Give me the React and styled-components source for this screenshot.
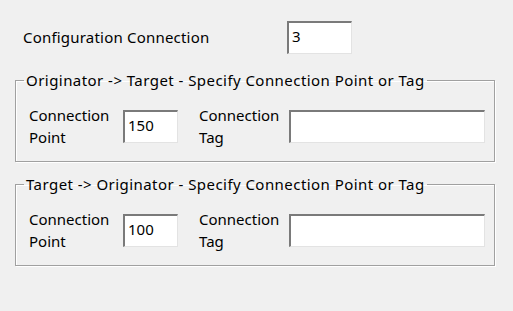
import React from "react";
import styled, { createGlobalStyle } from "styled-components";

const GlobalStyle = createGlobalStyle`
    html, body {
        margin: 0;
        padding: 0;
        background: #f0f0f0;
    }
    body {
        font-family: "Noto Sans", "Open Sans", sans-serif;
        font-size: 15px;
        color: #000;
    }
`;

const Dialog = styled.div`
    width: 513px;
    height: 311px;
    background: #f0f0f0;
    box-sizing: border-box;
    padding-top: 21px;
    overflow: hidden;
`;

const TopRow = styled.div`
    display: flex;
    align-items: flex-start;
    padding-left: 23px;
    height: 33px;
`;

const TopLabel = styled.div`
    width: 264px;
    line-height: 33px;
    letter-spacing: 0.2px;
`;

const TextBox = styled.div`
    box-sizing: border-box;
    width: ${(props) => props.width}px;
    height: 33px;
    background: #fff;
    border-top: 2px solid #7a7a7a;
    border-left: 2px solid #7a7a7a;
    border-right: 1px solid #e3e3e3;
    border-bottom: 1px solid #e3e3e3;
    padding: 3px 3px;
    line-height: 20px;
    flex-shrink: 0;
`;

const Group = styled.fieldset`
    box-sizing: border-box;
    margin: ${(props) => props.top}px 0 0 15px;
    width: 480px;
    height: 92px;
    padding: 20px 0 0 13px;
    border: 1px solid #a0a0a0;
    box-shadow: 1px 1px 0 #fff, inset 1px 1px 0 #fff;
    min-width: 0;
`;

const Legend = styled.legend`
    margin-left: -5px;
    padding: 0 2px;
    line-height: 20px;
    letter-spacing: 0.45px;
`;

const FieldRow = styled.div`
    display: flex;
    align-items: flex-start;
`;

const FieldLabel = styled.div`
    width: ${(props) => props.width}px;
    line-height: 22px;
    margin-top: -6px;
    flex-shrink: 0;
`;

const Field = styled.div`
    display: flex;
    align-items: flex-start;
    margin-right: ${(props) => props.gap || 0}px;
`;

const ConnectionGroup = ({ title, point, top }) => (
    <Group top={top}>
        <Legend>{title}</Legend>
        <FieldRow>
            <Field gap={21}>
                <FieldLabel width={94}>
                    Connection
                    <br />
                    Point
                </FieldLabel>
                <TextBox width={55}>{point}</TextBox>
            </Field>
            <Field>
                <FieldLabel width={90}>
                    Connection
                    <br />
                    Tag
                </FieldLabel>
                <TextBox width={196}></TextBox>
            </Field>
        </FieldRow>
    </Group>
);

const App = () => (
    <>
        <GlobalStyle />
        <Dialog>
            <TopRow>
                <TopLabel>Configuration Connection</TopLabel>
                <TextBox width={65}>3</TextBox>
            </TopRow>
            <ConnectionGroup
                top={16}
                title="Originator -> Target - Specify Connection Point or Tag"
                point="150"
            />
            <ConnectionGroup
                top={12}
                title="Target -> Originator - Specify Connection Point or Tag"
                point="100"
            />
        </Dialog>
    </>
);

export default App;
